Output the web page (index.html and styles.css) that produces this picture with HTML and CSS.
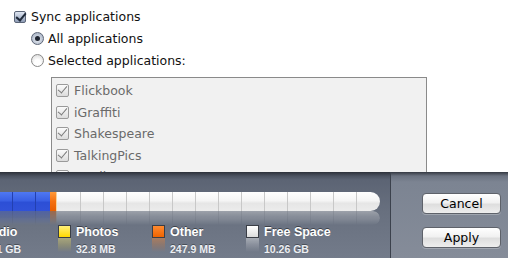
FILE: index.html
```html
<!DOCTYPE html>
<html>
<head>
<meta charset="utf-8">
<link rel="stylesheet" href="styles.css">
</head>
<body>
<div class="top">
  <label class="row row-sync"><span class="cb cb-on"></span>Sync applications</label>
  <label class="row row-radio"><span class="radio radio-on"></span>All applications</label>
  <label class="row row-radio"><span class="radio"></span>Selected applications:</label>
  <div class="listbox">
    <div class="item"><span class="cb cb-dim"></span>Flickbook</div>
    <div class="item"><span class="cb cb-dim"></span>iGraffiti</div>
    <div class="item"><span class="cb cb-dim"></span>Shakespeare</div>
    <div class="item"><span class="cb cb-dim"></span>TalkingPics</div>
    <div class="item"><span class="cb cb-dim"></span>Toodles</div>
  </div>
</div>
<div class="panel">
  <div class="panel-left">
    <div class="bar">
      <span class="seg blue lead"></span><span class="seg blue"></span><span class="seg blue"></span><span class="seg blue part"></span><span class="seg orange"></span><span class="seg free first"></span><span class="seg free"></span><span class="seg free"></span><span class="seg free"></span><span class="seg free"></span><span class="seg free"></span><span class="seg free"></span><span class="seg free"></span><span class="seg free"></span><span class="seg free"></span><span class="seg free"></span><span class="seg free"></span><span class="seg free"></span><span class="seg free last"></span>
    </div>
    <div class="bar reflect">
      <span class="seg blue lead"></span><span class="seg blue"></span><span class="seg blue"></span><span class="seg blue part"></span><span class="seg orange"></span><span class="seg free first"></span><span class="seg free"></span><span class="seg free"></span><span class="seg free"></span><span class="seg free"></span><span class="seg free"></span><span class="seg free"></span><span class="seg free"></span><span class="seg free"></span><span class="seg free"></span><span class="seg free"></span><span class="seg free"></span><span class="seg free"></span><span class="seg free last"></span>
    </div>
    <div class="legend">
      <div class="key"><span class="sw sw-audio"></span><div class="kt"><b>Audio</b><small>23.1 GB</small></div></div>
      <div class="key"><span class="sw sw-photos"></span><div class="kt"><b>Photos</b><small>32.8 MB</small></div></div>
      <div class="key"><span class="sw sw-other"></span><div class="kt"><b>Other</b><small>247.9 MB</small></div></div>
      <div class="key"><span class="sw sw-free"></span><div class="kt"><b>Free Space</b><small>10.26 GB</small></div></div>
    </div>
  </div>
  <div class="panel-right">
    <button class="btn">Cancel</button>
    <button class="btn">Apply</button>
  </div>
</div>
</body>
</html>
```

FILE: styles.css
```css
* { box-sizing: border-box; }
html, body { margin: 0; padding: 0; }
body {
  width: 508px;
  height: 258px;
  overflow: hidden;
  background: #fff;
  font-family: "DejaVu Sans", Verdana, sans-serif;
  font-size: 12px;
  color: #000;
}
.top {
  height: 172px;
  overflow: hidden;
  padding-top: 9px;
}
.row {
  display: flex;
  align-items: center;
  height: 22px;
  font-size: 12.5px;
  color: #111;
}
.row-sync { padding-left: 14px; height: 15px; margin-bottom: 3px; }
.row-radio { padding-left: 31px; }
.cb {
  display: inline-block;
  width: 12px;
  height: 12px;
  margin-right: 5px;
  border: 1px solid #6d7480;
  border-radius: 2px;
  background: linear-gradient(#f4f6fa, #b9c1cf);
  position: relative;
  flex: none;
}
.cb::after {
  content: "";
  position: absolute;
  left: 3px;
  top: -1px;
  width: 4px;
  height: 8px;
  border: solid #1f2a3a;
  border-width: 0 2px 2px 0;
  transform: rotate(40deg);
}
.cb-on { background: linear-gradient(#dfe6f2, #8f9db6); border-color: #5b6578; }
.cb-dim { border-color: #9a9a9a; background: linear-gradient(#fbfbfb, #dcdcdc); width: 13px; height: 13px; }
.cb-dim::after { border-color: #7a7a7a; border-width: 0 1.5px 1.5px 0; }
.radio {
  display: inline-block;
  width: 13px;
  height: 13px;
  border-radius: 50%;
  border: 1px solid #8a8a8a;
  background: radial-gradient(circle at 50% 70%, #ffffff 30%, #d4d4d4 100%);
  margin-right: 4px;
  position: relative;
  flex: none;
}
.radio-on { background: radial-gradient(circle at 50% 60%, #e8ecf3, #9aa6ba); border-color: #5d6677; }
.radio-on::after {
  content: "";
  position: absolute;
  left: 3px;
  top: 3px;
  width: 5px;
  height: 5px;
  border-radius: 50%;
  background: #1e2430;
}
.listbox {
  margin: 6px 0 0 51px;
  width: 376px;
  height: 120px;
  border: 1px solid #8a8a8a;
  background: #f1f1f1;
  padding-top: 2px;
}
.item {
  display: flex;
  align-items: center;
  height: 21.5px;
  padding-left: 4px;
  color: #6a6a6a;
  font-size: 12.5px;
}
.panel {
  height: 86px;
  display: flex;
}
.panel-left {
  width: 391px;
  border-right: 1px solid #3b414c;
  background: linear-gradient(#2c3039 0, #4b5260 4px, #5c6474 8px, #68707f 40px, #737b8a 86px);
  padding-top: 20px;
  overflow: hidden;
}
.panel-right {
  flex: 1;
  background: linear-gradient(#343842 0, #6b7280 4px, #7c8492 10px, #858c99 86px);
  display: flex;
  flex-direction: column;
  align-items: flex-end;
  padding: 21px 7px 0 0;
  gap: 13px;
}
.btn {
  width: 79px;
  height: 21px;
  border: 1px solid #5e626a;
  border-radius: 4px;
  background: linear-gradient(#ffffff, #f1f1f1 45%, #dedede 55%, #eeeeee);
  font-family: "DejaVu Sans", Verdana, sans-serif;
  font-size: 12.5px;
  color: #000;
  padding: 0;
  box-shadow: 0 1px 0 rgba(255,255,255,.25);
}
.bar {
  display: flex;
  margin-left: -22px;
  width: 402px;
  height: 19px;
  border-radius: 0 10px 10px 0;
  overflow: hidden;
}
.seg {
  height: 100%;
  width: 23px;
  flex: none;
  border-right: 1px solid rgba(0,0,0,.15);
}
.blue { background: linear-gradient(#4f78f2 0, #3a60e4 45%, #2c4fd6 55%, #3152d8 100%); border-right-color: #2340b0; }
.blue.lead { width: 12px; }
.blue.part { width: 14px; border-right: 0; }
.orange { width: 7px; background: linear-gradient(#ff9a3a, #f47010 50%, #e85e00); border-right: 1px solid #f7d29a; }
.free { background: linear-gradient(#ffffff 0, #f5f5f5 45%, #e6e6e6 60%, #ececec 100%); border-right-color: #c8c8c8; }
.free.first { width: 24px; }
.free.last { width: 33px; border-right: 0; }
.reflect {
  height: 14px;
  transform: scaleY(-1);
  opacity: .4;
  border-radius: 0 10px 10px 0;
  -webkit-mask-image: linear-gradient(to top, #000, transparent);
  mask-image: linear-gradient(to top, #000, transparent);
}
.legend {
  display: flex;
  margin-left: -36px;
}
.key {
  width: 94px;
  display: flex;
  flex: none;
}
.sw {
  width: 13px;
  height: 13px;
  margin-right: 5px;
  border: 1px solid #3a3e46;
  flex: none;
  position: relative;
}
.sw::after {
  content: "";
  position: absolute;
  left: -1px;
  top: 12px;
  width: 13px;
  height: 14px;
  opacity: .4;
  background: inherit;
  -webkit-mask-image: linear-gradient(#000, transparent);
  mask-image: linear-gradient(#000, transparent);
}
.sw-audio { background: #3256dc; }
.sw-photos { background: linear-gradient(#fff07a, #ffd800); }
.sw-other { background: linear-gradient(#ff8a30, #f06400); }
.sw-free { background: linear-gradient(#ffffff, #dcdcdc); }
.kt {
  display: flex;
  flex-direction: column;
  color: #fff;
  font-family: "Liberation Sans", Arial, sans-serif;
  line-height: 1;
}
.kt b {
  font-size: 12.5px;
  font-weight: bold;
  text-shadow: 0 -1px 0 rgba(0,0,0,.45);
  margin-top: 1px;
}
.kt small {
  font-size: 10.5px;
  font-weight: bold;
  color: #eceef2;
  margin-top: 5px;
  text-shadow: 0 -1px 0 rgba(0,0,0,.35);
}
```
